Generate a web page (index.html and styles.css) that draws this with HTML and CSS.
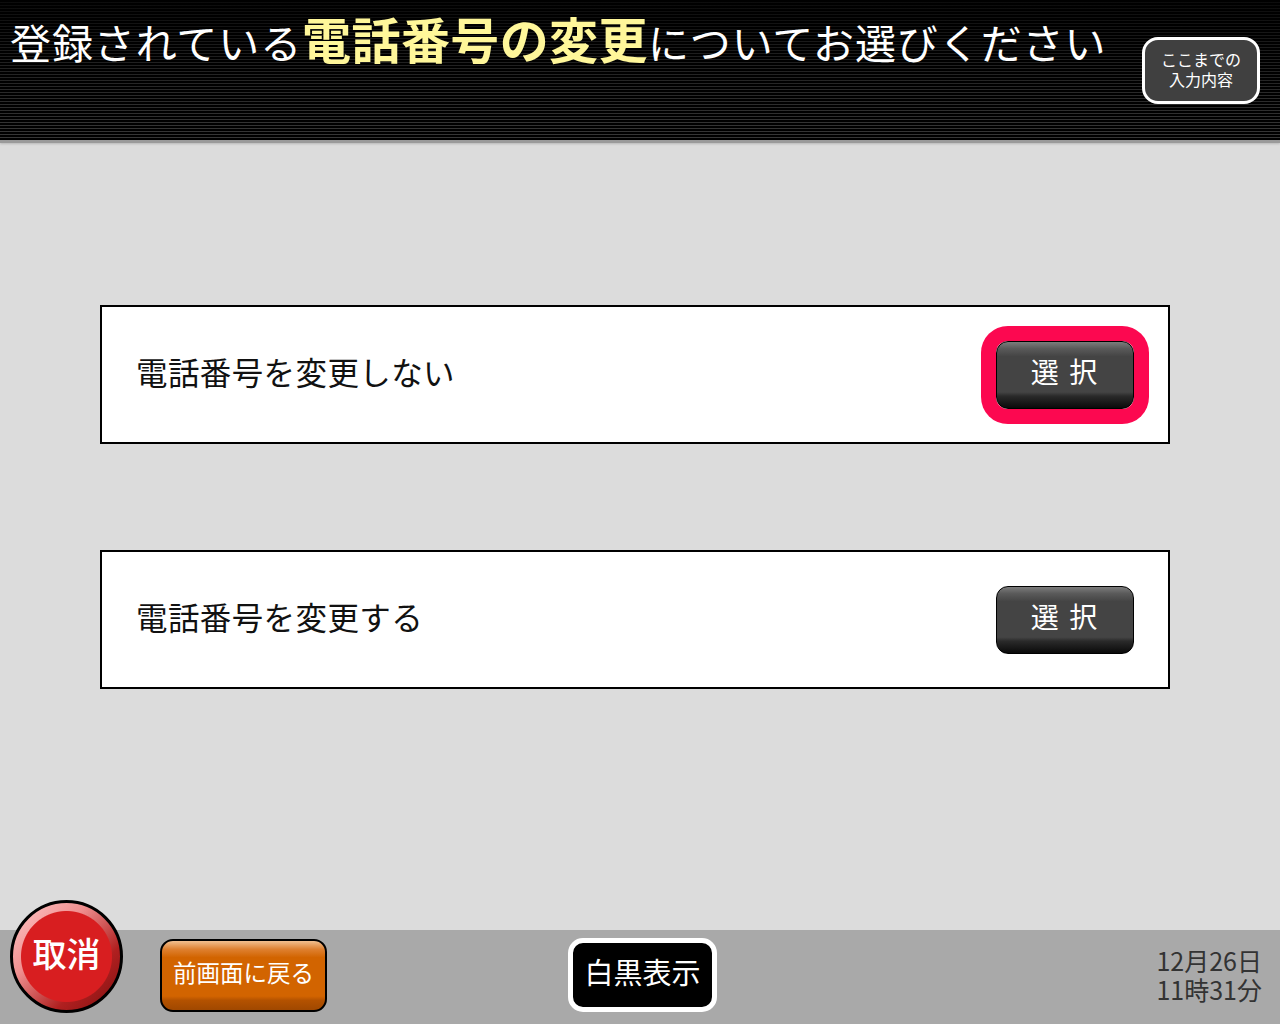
FILE: index.html
```html
<!DOCTYPE html>
<html lang="ja">
<head>
<meta charset="utf-8">
<title>電話番号の変更</title>
<link rel="stylesheet" href="styles.css">
</head>
<body>
<div class="screen">
  <header class="header">
    <h1 class="title">登録されている<span class="hl">電話番号の変更</span>についてお選びください</h1>
    <button class="history-btn"><span class="history-line">ここまでの</span><span class="history-line">入力内容</span></button>
  </header>
  <main class="main">
    <div class="card">
      <span class="card-text">電話番号を変更しない</span>
      <button class="select-btn focused">選 択</button>
    </div>
    <div class="card">
      <span class="card-text">電話番号を変更する</span>
      <button class="select-btn">選 択</button>
    </div>
  </main>
  <footer class="footer">
    <button class="cancel-btn">取消</button>
    <button class="back-btn">前画面に戻る</button>
    <button class="mono-btn">白黒表示</button>
    <div class="datetime"><span class="dt-line">12月26日</span><span class="dt-line">11時31分</span></div>
  </footer>
</div>
</body>
</html>
```

FILE: styles.css
```css
* { box-sizing: border-box; }
html, body { margin: 0; padding: 0; }
body {
  width: 1280px;
  height: 1024px;
  overflow: hidden;
  font-family: "Noto Sans CJK JP", "Noto Sans", sans-serif;
  background: #dcdcdc;
}
button { font-family: inherit; cursor: pointer; padding: 0; }
.screen { display: flex; flex-direction: column; width: 1280px; height: 1024px; }

.header {
  height: 143px;
  flex: none;
  display: flex;
  align-items: flex-start;
  border-bottom: 3px solid #9a9a9a;
  background:
    linear-gradient(to bottom, rgba(0,0,0,0.8) 0, rgba(0,0,0,0.45) 45%, rgba(0,0,0,0.05) 100%),
    repeating-linear-gradient(to bottom, #000 0 2px, #3a3a3a 2px 3px);
  box-shadow: 0 1px 2px #b8b8b8;
}
.title {
  margin: 10px 0 0 10px;
  font-size: 41px;
  line-height: 56px;
  font-weight: 400;
  color: #fff;
  white-space: nowrap;
  letter-spacing: 0.9px;
}
.hl { color: #fff79a; font-weight: 700; font-size: 49px; letter-spacing: 0.4px; }
.history-btn {
  margin: 37px 20px 0 auto;
  width: 118px;
  height: 67px;
  border: 3px solid #fff;
  border-radius: 16px;
  background: #404040;
  color: #fff;
  font-size: 16px;
  display: flex;
  flex-direction: column;
  align-items: center;
  justify-content: center;
  padding-bottom: 4px;
}
.history-line { display: block; line-height: 20px; height: 20px; }

.main {
  flex: 1;
  display: flex;
  flex-direction: column;
  gap: 106px;
  padding: 162px 0 0 100px;
}
.card {
  width: 1070px;
  height: 139px;
  border: 2px solid #000;
  background: #fff;
  display: flex;
  align-items: center;
  justify-content: space-between;
  padding: 0 34px 0 34px;
}
.card-text {
  font-size: 31.5px;
  color: #111;
  letter-spacing: 0.4px;
  padding-bottom: 8px;
}
.select-btn {
  width: 138px;
  height: 68px;
  border: 1.5px solid #000;
  border-radius: 12px;
  color: #fff;
  font-size: 28px;
  letter-spacing: 2px;
  padding-bottom: 8px;
  background: linear-gradient(to bottom, #7c7c7c 0, #5a5a5a 10%, #444 22%, #444 76%, #2a2a2a 82%, #0a0a0a 100%);
}
.select-btn.focused {
  box-shadow: 0 0 0 15px #fc0850;
}

.footer {
  height: 94px;
  flex: none;
  background: #a9a9a9;
  display: flex;
  align-items: flex-start;
}
.cancel-btn {
  margin: -30px 0 0 10px;
  width: 113px;
  height: 113px;
  border-radius: 50%;
  border: 3px solid #000;
  color: #fff;
  font-size: 34px;
  font-weight: 500;
  padding-bottom: 8px;
  background:
    radial-gradient(circle at 50% 50%, #d81e20 0 45px, transparent 46px),
    linear-gradient(135deg, #ffc8c8 0, #f09090 35%, #b02020 70%, #801010 100%);
}
.back-btn {
  margin: 9px 0 0 37px;
  width: 167px;
  height: 73px;
  border: 2px solid #000;
  border-radius: 13px;
  color: #fff;
  font-size: 23.5px;
  padding-bottom: 8px;
  background: linear-gradient(to bottom, #f2c090 0, #de8030 12%, #d26400 24%, #d26400 80%, #b45200 86%, #a04800 100%);
}
.mono-btn {
  margin: 8px 0 0 241px;
  width: 149px;
  height: 74px;
  border: 5px solid #fff;
  border-radius: 15px;
  background: #000;
  color: #fff;
  font-size: 29px;
  padding-bottom: 8px;
}
.datetime {
  margin: 16px 18px 0 auto;
  font-size: 25px;
  color: #333;
  display: flex;
  flex-direction: column;
}
.dt-line { display: block; line-height: 29px; height: 29px; }
```
